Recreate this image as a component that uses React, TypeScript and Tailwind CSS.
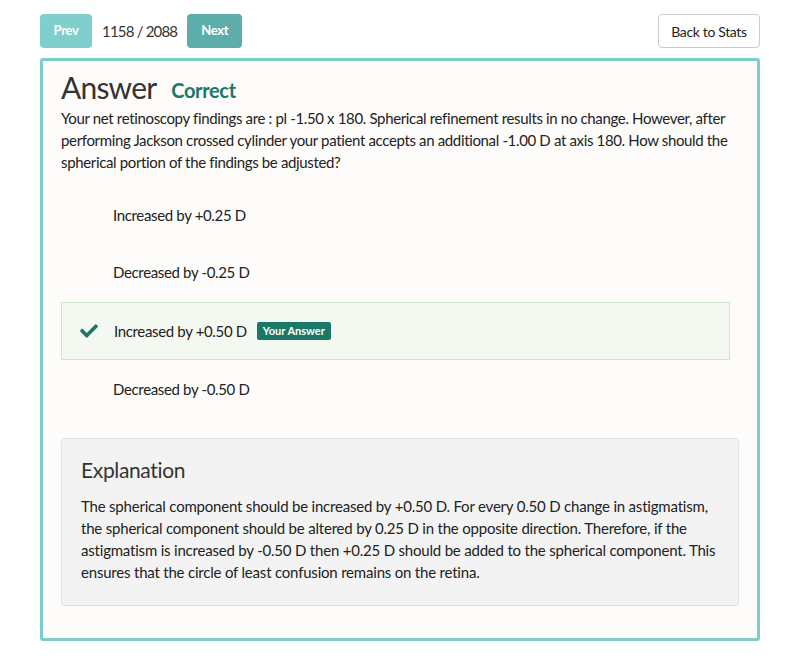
import React from "react";

const options = [
  { label: "Increased by +0.25 D" },
  { label: "Decreased by -0.25 D" },
  { label: "Increased by +0.50 D", selected: true },
  { label: "Decreased by -0.50 D" },
];

function CheckIcon() {
  return (
    <svg viewBox="0 0 512 512" className="h-[18px] w-[20px] fill-[#1b7866]">
      <path d="M173.898 439.404l-166.4-166.4c-9.997-9.997-9.997-26.206 0-36.204l36.203-36.204c9.997-9.998 26.207-9.998 36.204 0L192 312.69 432.095 72.596c9.997-9.997 26.207-9.997 36.204 0l36.203 36.204c9.997 9.997 9.997 26.206 0 36.204l-294.4 294.401c-9.998 9.997-26.207 9.997-36.204-.001z" />
    </svg>
  );
}

export default function App() {
  return (
    <div className="min-h-[664px] bg-white px-10 pt-[14px] font-['Lato',sans-serif] tracking-[-0.35px] text-[#333]">
      <div className="flex items-center justify-between">
        <div className="flex items-center">
          <button className="h-[34px] w-[52px] rounded-[4px] bg-[#7fd0cc] text-[13px] font-bold text-white">
            Prev
          </button>
          <span className="ml-[10px] text-[15px] tracking-[-0.8px] text-[#333]">1158 / 2088</span>
          <button className="ml-[10px] h-[34px] w-[55px] rounded-[4px] bg-[#5dadaa] text-[13px] font-bold text-white">
            Next
          </button>
        </div>
        <button className="h-[34px] w-[102px] rounded-[4px] border border-[#ccc] bg-white text-[14px] text-[#222]">
          Back to Stats
        </button>
      </div>

      <div className="mt-[10px] h-[583px] rounded-[3px] border-[3px] border-[#7ccecb] bg-[#fdfcfa] px-[18px] pt-[7px]">
        <div className="flex items-end">
          <h1 className="text-[30px] leading-[38px] tracking-[-0.8px] text-[#333]">Answer</h1>
          <span className="mb-[1px] ml-[15px] text-[20px] font-bold leading-[30px] text-[#1b7866]">Correct</span>
        </div>
        <p className="mt-[1px] text-[15px] leading-[22px] text-[#222]">
          Your net retinoscopy findings are : pl -1.50 x 180. Spherical refinement results in no change. However, after performing Jackson crossed cylinder your patient accepts an additional -1.00 D at axis 180. How should the spherical portion of the findings be adjusted?
        </p>

        <div className="mr-[9px] mt-[14px] flex flex-col">
          {options.map((o) =>
            o.selected ? (
              <div
                key={o.label}
                className="my-[1px] flex h-[58px] items-center border border-[#cfe5cb] bg-[#f3f8f1] pl-[17px]"
              >
                <CheckIcon />
                <span className="ml-[15px] text-[15px] text-[#222]">{o.label}</span>
                <span className="ml-[10px] rounded-[2px] bg-[#1b7866] px-[6px] py-[2px] text-[11px] font-bold leading-[14px] tracking-normal text-white">
                  Your Answer
                </span>
              </div>
            ) : (
              <div key={o.label} className="flex h-[57px] items-center pl-[52px]">
                <span className="text-[15px] text-[#222]">{o.label}</span>
              </div>
            )
          )}
        </div>

        <div className="mt-[20px] h-[168px] rounded-[4px] border border-[#e1e1e1] bg-[#f3f3f3] px-[19px] pt-[16px]">
          <h2 className="text-[21px] leading-[30px] text-[#333]">Explanation</h2>
          <p className="mt-[10px] text-[15px] leading-[22px] tracking-[-0.2px] text-[#222]">
            The spherical component should be increased by +0.50 D. For every 0.50 D change in astigmatism, the spherical component should be altered by 0.25 D in the opposite direction. Therefore, if the astigmatism is increased by -0.50 D then +0.25 D should be added to the spherical component. This ensures that the circle of least confusion remains on the retina.
          </p>
        </div>
      </div>
    </div>
  );
}
